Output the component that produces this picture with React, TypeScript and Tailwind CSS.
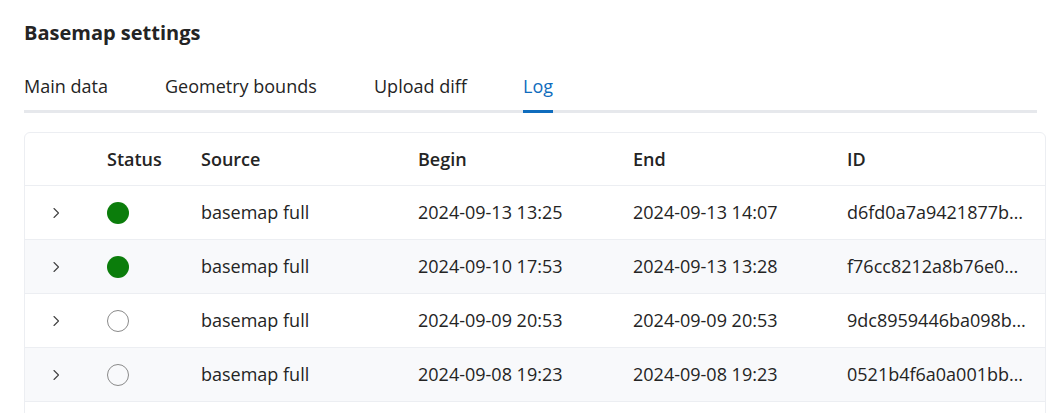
import React from "react";

const rows = [
  { ok: true, source: "basemap full", begin: "2024-09-13 13:25", end: "2024-09-13 14:07", id: "d6fd0a7a9421877b…" },
  { ok: true, source: "basemap full", begin: "2024-09-10 17:53", end: "2024-09-13 13:28", id: "f76cc8212a8b76e0…" },
  { ok: false, source: "basemap full", begin: "2024-09-09 20:53", end: "2024-09-09 20:53", id: "9dc8959446ba098b…" },
  { ok: false, source: "basemap full", begin: "2024-09-08 19:23", end: "2024-09-08 19:23", id: "0521b4f6a0a001bb…" },
];

function Chevron() {
  return (
    <svg width="8" height="12" viewBox="0 0 8 12" fill="none">
      <path d="M2 1.5 L6.5 6 L2 10.5" stroke="#424242" strokeWidth="1.1" strokeLinecap="round" strokeLinejoin="round" />
    </svg>
  );
}

export default function App() {
  return (
    <div
      className="w-[1061px] h-[413px] overflow-hidden bg-white text-[#242424] px-6"
      style={{ fontFamily: '"Open Sans", "Noto Sans", sans-serif' }}
    >
      <h1 className="pt-[20px] text-[20px] font-bold leading-[26px]">Basemap settings</h1>
      <div className="mt-[28px] flex border-b-[3px] border-[#e6e8ec] text-[18px] leading-[24px] font-medium">
        <div className="pb-[12px] w-[141px] whitespace-nowrap">Main data</div>
        <div className="pb-[12px] w-[209px] whitespace-nowrap">Geometry bounds</div>
        <div className="pb-[12px] w-[149px] whitespace-nowrap">Upload diff</div>
        <div className="relative pb-[12px] text-[#0f6cbd]">
          Log
          <div className="absolute left-0 right-0 -bottom-[3px] h-[3px] bg-[#0f6cbd]" />
        </div>
      </div>
      <div className="mt-[19px] w-[1022px] rounded-t-[6px] border border-[#eceef2] text-[18px]">
        <div className="flex h-[53px] items-center border-b border-[#eceef2] font-semibold">
          <div className="w-[82px]" />
          <div className="w-[94px]">Status</div>
          <div className="w-[217px]">Source</div>
          <div className="w-[215px]">Begin</div>
          <div className="w-[214px]">End</div>
          <div className="flex-1">ID</div>
        </div>
        {rows.map((r, i) => (
          <div
            key={i}
            className={`flex h-[54px] items-center border-b border-[#eceef2] ${i % 2 === 1 ? "bg-[#f8f9fb]" : "bg-white"}`}
          >
            <div className="w-[82px] flex pl-[27px]">
              <Chevron />
            </div>
            <div className="w-[94px] flex">
              {r.ok ? (
                <div className="w-[22px] h-[22px] rounded-full bg-[#0b7d0b]" />
              ) : (
                <div className="w-[22px] h-[22px] rounded-full border-[1.5px] border-[#8a8a8a]" />
              )}
            </div>
            <div className="w-[217px] whitespace-nowrap">{r.source}</div>
            <div className="w-[215px] whitespace-nowrap">{r.begin}</div>
            <div className="w-[214px] whitespace-nowrap">{r.end}</div>
            <div className="flex-1 whitespace-nowrap">{r.id}</div>
          </div>
        ))}
        <div className="h-[20px]" />
      </div>
    </div>
  );
}
